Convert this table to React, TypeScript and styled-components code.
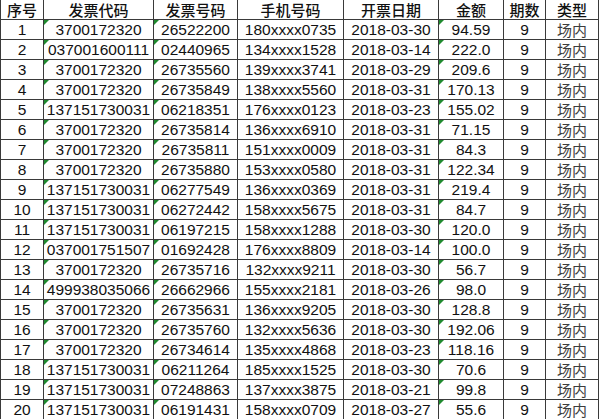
import React from "react";
import styled, { createGlobalStyle } from "styled-components";

const Global = createGlobalStyle`
  html, body { margin: 0; padding: 0; background: #fff; }
  body { font-family: "Liberation Sans", Arial, "Noto Sans CJK SC", sans-serif; }
`;

const COLS = [43, 110, 84, 106, 95, 65, 42, 53];

const Grid = styled.div`
  display: grid;
  grid-template-columns: ${COLS.map((c) => `${c}px`).join(" ")};
  grid-auto-rows: 20px;
  border-left: 1px solid #3a3a3a;
  width: max-content;
  background: #fff;
`;

const Cell = styled.div<{ $marked?: boolean; $muted?: boolean; $head?: boolean }>`
  position: relative;
  box-sizing: border-box;
  border-right: 1px solid #3a3a3a;
  border-bottom: 1px solid #3a3a3a;
  display: flex;
  align-items: center;
  justify-content: center;
  font-size: ${(p) => (p.$head || p.$muted ? "15px" : "15.5px")};
  font-weight: ${(p) => (p.$head ? 500 : 400)};
  line-height: 19px;
  color: ${(p) => (p.$muted ? "#3c3c3c" : "#111")};
  font-family: ${(p) =>
    p.$head || p.$muted
      ? `"Noto Sans CJK SC", "Liberation Sans", sans-serif`
      : `"Liberation Sans", Arial, sans-serif`};
  white-space: nowrap;
  overflow: hidden;
  &::before {
    content: "";
    display: ${(p) => (p.$marked ? "block" : "none")};
    position: absolute;
    left: 0;
    top: 0;
    width: 0;
    height: 0;
    border-top: 5px solid #1f8a2e;
    border-right: 5px solid transparent;
  }
`;

const HEAD = ["序号", "发票代码", "发票号码", "手机号码", "开票日期", "金额", "期数", "类型"];

const ROWS: [string, string, string, string, string][] = [
  ["3700172320", "26522200", "180xxxx0735", "2018-03-30", "94.59"],
  ["037001600111", "02440965", "134xxxx1528", "2018-03-14", "222.0"],
  ["3700172320", "26735560", "139xxxx3741", "2018-03-29", "209.6"],
  ["3700172320", "26735849", "138xxxx5560", "2018-03-31", "170.13"],
  ["137151730031", "06218351", "176xxxx0123", "2018-03-23", "155.02"],
  ["3700172320", "26735814", "136xxxx6910", "2018-03-31", "71.15"],
  ["3700172320", "26735811", "151xxxx0009", "2018-03-31", "84.3"],
  ["3700172320", "26735880", "153xxxx0580", "2018-03-31", "122.34"],
  ["137151730031", "06277549", "136xxxx0369", "2018-03-31", "219.4"],
  ["137151730031", "06272442", "158xxxx5675", "2018-03-31", "84.7"],
  ["137151730031", "06197215", "158xxxx1288", "2018-03-30", "120.0"],
  ["037001751507", "01692428", "176xxxx8809", "2018-03-14", "100.0"],
  ["3700172320", "26735716", "132xxxx9211", "2018-03-30", "56.7"],
  ["499938035066", "26662966", "155xxxx2181", "2018-03-26", "98.0"],
  ["3700172320", "26735631", "136xxxx9205", "2018-03-30", "128.8"],
  ["3700172320", "26735760", "132xxxx5636", "2018-03-30", "192.06"],
  ["3700172320", "26734614", "135xxxx4868", "2018-03-23", "118.16"],
  ["137151730031", "06211264", "185xxxx1525", "2018-03-30", "70.6"],
  ["137151730031", "07248863", "137xxxx3875", "2018-03-21", "99.8"],
  ["137151730031", "06191431", "158xxxx0709", "2018-03-27", "55.6"],
];

export default function App() {
  return (
    <>
      <Global />
      <Grid>
        {HEAD.map((h) => (
          <Cell key={h} $head>
            {h}
          </Cell>
        ))}
        {ROWS.map((r, i) => (
          <React.Fragment key={i}>
            <Cell>{i + 1}</Cell>
            <Cell $marked>{r[0]}</Cell>
            <Cell $marked>{r[1]}</Cell>
            <Cell>{r[2]}</Cell>
            <Cell>{r[3]}</Cell>
            <Cell $marked>{r[4]}</Cell>
            <Cell>9</Cell>
            <Cell $muted>场内</Cell>
          </React.Fragment>
        ))}
      </Grid>
    </>
  );
}
